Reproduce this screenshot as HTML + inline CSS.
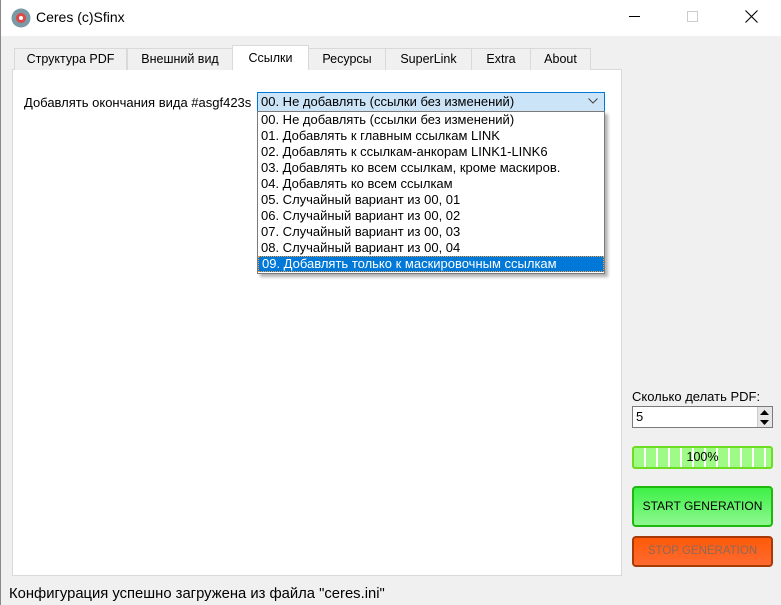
<!DOCTYPE html>
<html><head><meta charset="utf-8"><style>
*{margin:0;padding:0;box-sizing:border-box}
body{width:781px;height:605px;background:#f0f0f0;font-family:"Liberation Sans","DejaVu Sans",sans-serif;font-size:12px;color:#000;position:relative;overflow:hidden}
.a{position:absolute;white-space:nowrap}
.tab{position:absolute;top:48px;height:22px;border:1px solid #d9d9d9;border-bottom:none;background:#f0f0f0;text-align:center;line-height:21px;font-size:12.5px}
.it{height:16px;line-height:16px;padding-left:3px;font-size:13px}
</style></head><body>
<div class="a" style="left:0;top:0;width:781px;height:36px;background:#fff"></div>
<div class="a" style="left:0;top:0;width:1px;height:605px;background:#888"></div>
<svg class="a" style="left:11px;top:8px" width="20" height="20"><circle cx="10" cy="10" r="9.5" fill="#7a9aa8"/><circle cx="10" cy="10" r="5" fill="#e04848"/><circle cx="10" cy="10" r="2" fill="#fff"/></svg>
<div class="a" style="left:36px;top:9px;font-size:14px">Ceres (c)Sfinx</div>
<div class="a" style="left:629px;top:16px;width:11px;height:1px;background:#000"></div>
<div class="a" style="left:687px;top:11px;width:11px;height:11px;border:1px solid #ccc"></div>
<svg class="a" style="left:745px;top:10px" width="13" height="13"><path d="M0.5 0.5L12.5 12.5M12.5 0.5L0.5 12.5" stroke="#000" stroke-width="1.1"/></svg>

<div class="a" style="left:12px;top:69px;width:610px;height:507px;background:#fff;border:1px solid #d9d9d9"></div>
<div class="tab" style="left:14px;width:113px">Структура PDF</div>
<div class="tab" style="left:127px;width:106px">Внешний вид</div>
<div class="tab" style="left:308px;width:78px">Ресурсы</div>
<div class="tab" style="left:385px;width:87px">SuperLink</div>
<div class="tab" style="left:471px;width:60px">Extra</div>
<div class="tab" style="left:530px;width:61px">About</div>
<div class="tab" style="left:232px;top:45px;height:25px;width:77px;background:#fff;line-height:25px">Ссылки</div>

<div class="a" style="left:24px;top:95px;font-size:13px">Добавлять окончания вида #asgf423s</div>
<div class="a" style="left:257px;top:92px;width:348px;height:20px;background:#cce4f7;border:1px solid #0078d7;line-height:18px;padding-left:3px;font-size:13px">00. Не добавлять (ссылки без изменений)</div>
<svg class="a" style="left:588px;top:98px" width="10" height="6"><path d="M0.5 0.5L5 5L9.5 0.5" fill="none" stroke="#444"/></svg>
<div class="a" style="left:257px;top:111px;width:348px;height:163px;background:#fff;border:1px solid #7a7a7a;box-shadow:3px 3px 3px rgba(0,0,0,.3)">
<div class="it">00. Не добавлять (ссылки без изменений)</div>
<div class="it">01. Добавлять к главным ссылкам LINK</div>
<div class="it">02. Добавлять к ссылкам-анкорам LINK1-LINK6</div>
<div class="it">03. Добавлять ко всем ссылкам, кроме маскиров.</div>
<div class="it">04. Добавлять ко всем ссылкам</div>
<div class="it">05. Случайный вариант из 00, 01</div>
<div class="it">06. Случайный вариант из 00, 02</div>
<div class="it">07. Случайный вариант из 00, 03</div>
<div class="it">08. Случайный вариант из 00, 04</div>
<div class="it" style="background:#0078d7;color:#fff;border:1px dotted #f0a040;line-height:14px">09. Добавлять только к маскировочным ссылкам</div>
</div>

<div class="a" style="left:632px;top:389px;font-size:13px">Сколько делать PDF:</div>
<div class="a" style="left:632px;top:406px;width:141px;height:22px;background:#fff;border:1px solid #7a7a7a;padding-left:3px;line-height:20px;font-size:13px">5</div>
<div class="a" style="left:757px;top:407px;width:15px;height:20px;background:#e5e5e5;border-left:1px solid #ccc"></div>
<svg class="a" style="left:760px;top:410px" width="9" height="15"><path d="M0 5L4.5 0L9 5Z M0 10L4.5 15L9 10Z" fill="#000"/></svg>
<div class="a" style="left:632px;top:446px;width:141px;height:23px;border:2px solid #6edc20;border-radius:3px;background:repeating-linear-gradient(90deg,#9efb86 0 10px,#fff 10px 12px);text-align:center;line-height:19px;font-size:12.5px">100%</div>
<div class="a" style="left:632px;top:486px;width:141px;height:41px;border:2px solid #1fb80e;border-radius:4px;background:linear-gradient(#3ef046,#8ef890);text-align:center;line-height:37px;font-size:12px">START GENERATION</div>
<div class="a" style="left:632px;top:536px;width:141px;height:31px;border:2px solid #a83a08;border-radius:4px;background:linear-gradient(#ff5a08,#ff6a30);text-align:center;line-height:27px;font-size:11.5px;color:#8a6a5a">STOP GENERATION</div>
<div class="a" style="left:9px;top:586px;font-size:14.8px">Конфигурация успешно загружена из файла "ceres.ini"</div>
</body></html>
